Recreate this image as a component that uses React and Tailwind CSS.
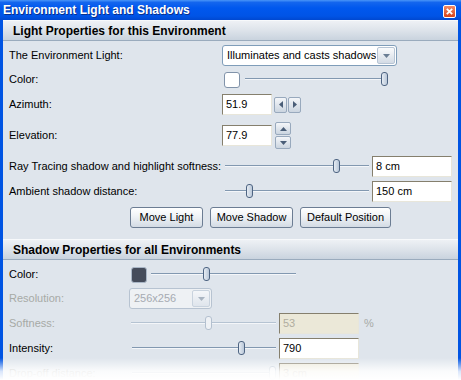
import React from "react";

const Slider = ({ width, thumb, disabled = false, className = "" }) => (
  <div className={`relative h-[15px] flex-none ${className}`} style={{ width }}>
    <div
      className={`absolute left-0 right-0 top-[6px] h-[1px] ${disabled ? "bg-[#b5c3d2]" : "bg-[#8298b0]"}`}
    />
    <div className="absolute left-0 right-0 top-[7px] h-[1px] bg-[#f4f6f9]" />
    <div
      className={`absolute top-0 h-[14px] w-[7px] rounded-[3px] border ${
        disabled
          ? "border-[#b3c0cf] bg-[#eef1f5]"
          : "border-[#4e6482] bg-[linear-gradient(to_right,#e6ecf3,#b9c7d8)]"
      }`}
      style={{ left: thumb }}
    />
  </div>
);

const TextBox = ({ value, width, disabled = false, className = "" }) => (
  <div
    className={`h-[21px] flex-none flex items-center pl-[3px] border border-t-[#857f6d] border-l-[#857f6d] border-b-[#e8e6da] border-r-[#e8e6da] ${
      disabled ? "bg-[#ebe8d8] text-[#b0ad9f]" : "bg-white text-black"
    } ${className}`}
    style={{ width }}
  >
    {value}
  </div>
);

const Arrow = ({ dir, color = "#56697f" }) => {
  const pts = {
    down: "0,0 7,0 3.5,4",
    up: "0,4 7,4 3.5,0",
    left: "4,0 4,7 0,3.5",
    right: "0,0 0,7 4,3.5",
  }[dir];
  const w = dir === "down" || dir === "up" ? 7 : 4;
  const h = dir === "down" || dir === "up" ? 4 : 7;
  return (
    <svg width={w} height={h} viewBox={`0 0 ${w} ${h}`}>
      <polygon points={pts} fill={color} />
    </svg>
  );
};

const Combo = ({ value, width, height = 21, disabled = false }) => (
  <div
    className={`flex-none flex rounded-[3px] border ${
      disabled ? "border-[#b7c3d1] bg-[#eef1f4] text-[#a6abb2]" : "border-[#7f9db9] bg-white text-black"
    }`}
    style={{ width, height }}
  >
    <div className="flex-1 flex items-center pl-[4px] whitespace-nowrap overflow-hidden">{value}</div>
    <div
      className={`w-[18px] m-[1px] rounded-[2px] flex items-center justify-center border ${
        disabled
          ? "border-[#c9d3de] bg-[linear-gradient(to_bottom,#f4f6f9,#dfe5ec)]"
          : "border-[#b6c4d4] bg-[linear-gradient(to_bottom,#fafbfc,#d3dbe5)]"
      }`}
    >
      <Arrow dir="down" color={disabled ? "#a9b4c1" : "#6a7d93"} />
    </div>
  </div>
);

const SpinBtn = ({ dir, className = "" }) => (
  <div
    className={`flex items-center justify-center rounded-[2px] border border-[#98a9bd] bg-[linear-gradient(to_bottom,#f4f6f9,#cbd5e0)] ${className}`}
  >
    <Arrow dir={dir} color="#4a5e78" />
  </div>
);

const Btn = ({ children, width }) => (
  <div
    className="h-[21px] flex items-center justify-center rounded-[3px] border border-[#6c7d93] bg-[linear-gradient(to_bottom,#ffffff,#f1f4f7_40%,#d3dbe4)] text-black whitespace-nowrap"
    style={{ width }}
  >
    {children}
  </div>
);

const Header = ({ children }) => (
  <div className="h-[21px] flex items-center pl-[10px] border-t border-t-[#f7f9fb] border-b border-b-[#9aabbd] bg-[linear-gradient(to_bottom,#eef1f5,#dde3ea_50%,#c9d3de)] font-bold text-[12px] text-black">
    {children}
  </div>
);

export default function App() {
  return (
    <div className="relative w-[461px] h-[380px] overflow-hidden bg-[#0054e3] font-['Liberation_Sans',Arial,sans-serif] text-[11px] leading-none">
      {/* Title bar */}
      <div className="h-[20px] flex items-center justify-between pl-[3px] pr-[5px] bg-[linear-gradient(to_bottom,#4a95f8_0%,#1466ee_12%,#0058ee_40%,#0054e6_80%,#0048d0_100%)]">
        <span className="text-white font-bold text-[12px] [text-shadow:1px_1px_0_#0a2f8a]">
          Environment Light and Shadows
        </span>
        <div className="w-[13px] h-[13px] mt-[2px] rounded-[2px] border border-white bg-[linear-gradient(to_bottom,#ef8a66,#d8441b)] flex items-center justify-center">
          <svg width="7" height="7" viewBox="0 0 7 7">
            <path d="M0.8 0.8 L6.2 6.2 M6.2 0.8 L0.8 6.2" stroke="white" strokeWidth="1.8" />
          </svg>
        </div>
      </div>

      {/* Body */}
      <div className="ml-[3px] mr-[3px] h-[360px] overflow-hidden bg-[#dfe5ec]">
        <Header>Light Properties for this Environment</Header>

        {/* Row: environment light */}
        <div className="mt-[4px] h-[21px] flex items-center">
          <div className="w-[219px] pl-[6px]">The Environment Light:</div>
          <Combo value="Illuminates and casts shadows" width={175} />
        </div>

        {/* Row: color */}
        <div className="mt-[5px] h-[17px] flex items-center">
          <div className="w-[219px] pl-[6px]">Color:</div>
          <div className="ml-[2px] w-[16px] h-[16px] rounded-[3px] border border-[#8193aa] bg-white" />
          <Slider width={142} thumb={136} className="ml-[5px]" />
        </div>

        {/* Row: azimuth */}
        <div className="mt-[6px] h-[21px] flex items-center">
          <div className="w-[219px] pl-[6px]">Azimuth:</div>
          <TextBox value="51.9" width={50} />
          <div className="ml-[2px] flex gap-[1px]">
            <SpinBtn dir="left" className="w-[13px] h-[16px]" />
            <SpinBtn dir="right" className="w-[13px] h-[16px]" />
          </div>
        </div>

        {/* Row: elevation */}
        <div className="mt-[7px] h-[27px] flex items-center">
          <div className="w-[219px] pl-[6px]">Elevation:</div>
          <TextBox value="77.9" width={50} />
          <div className="ml-[3px] flex flex-col gap-[1px]">
            <SpinBtn dir="up" className="w-[16px] h-[13px]" />
            <SpinBtn dir="down" className="w-[16px] h-[13px]" />
          </div>
        </div>

        {/* Row: ray tracing */}
        <div className="mt-[7px] h-[21px] flex items-center">
          <div className="w-[222px] pl-[6px]">Ray Tracing shadow and highlight softness:</div>
          <Slider width={144} thumb={108} />
          <TextBox value="8 cm" width={80} className="ml-[3px]" />
        </div>

        {/* Row: ambient */}
        <div className="mt-[4px] h-[21px] flex items-center">
          <div className="w-[222px] pl-[6px]">Ambient shadow distance:</div>
          <Slider width={144} thumb={21} />
          <TextBox value="150 cm" width={80} className="ml-[3px]" />
        </div>

        {/* Buttons */}
        <div className="mt-[5px] flex pl-[127px] gap-[7px]">
          <Btn width={73}>Move Light</Btn>
          <Btn width={83}>Move Shadow</Btn>
          <Btn width={91}>Default Position</Btn>
        </div>

        <div className="mt-[11px]">
          <Header>Shadow Properties for all Environments</Header>
        </div>

        {/* Shadow color */}
        <div className="mt-[6px] h-[17px] flex items-center">
          <div className="w-[128px] pl-[6px]">Color:</div>
          <div className="w-[16px] h-[16px] rounded-[3px] border border-[#a9b6c6] bg-[#454c5b]" />
          <Slider width={145} thumb={52} className="ml-[4px]" />
        </div>

        {/* Resolution */}
        <div className="mt-[5px] h-[21px] flex items-center text-[#a7aaa6]">
          <div className="w-[126px] pl-[6px]">Resolution:</div>
          <Combo value="256x256" width={83} height={21} disabled />
        </div>

        {/* Softness */}
        <div className="mt-[4px] h-[21px] flex items-center">
          <div className="w-[128px] pl-[6px] text-[#a7aaa6]">Softness:</div>
          <Slider width={145} thumb={74} disabled />
          <TextBox value="53" width={80} disabled className="ml-[3px]" />
          <span className="ml-[5px] text-[#a7aaa6]">%</span>
        </div>

        {/* Intensity */}
        <div className="mt-[4px] h-[21px] flex items-center">
          <div className="w-[129px] pl-[6px]">Intensity:</div>
          <Slider width={144} thumb={106} />
          <TextBox value="790" width={80} className="ml-[3px]" />
        </div>

        {/* Drop-off */}
        <div className="mt-[4px] h-[21px] flex items-center">
          <div className="w-[129px] pl-[6px] text-[#a7aaa6]">Drop-off distance:</div>
          <Slider width={144} thumb={137} disabled />
          <TextBox value="3 cm" width={80} disabled className="ml-[3px]" />
        </div>
      </div>

      {/* bottom fade */}
      <div className="pointer-events-none absolute left-0 right-0 bottom-0 h-[22px] bg-[linear-gradient(to_bottom,rgba(255,255,255,0),rgba(255,255,255,0.85)_60%,#ffffff)]" />
    </div>
  );
}
